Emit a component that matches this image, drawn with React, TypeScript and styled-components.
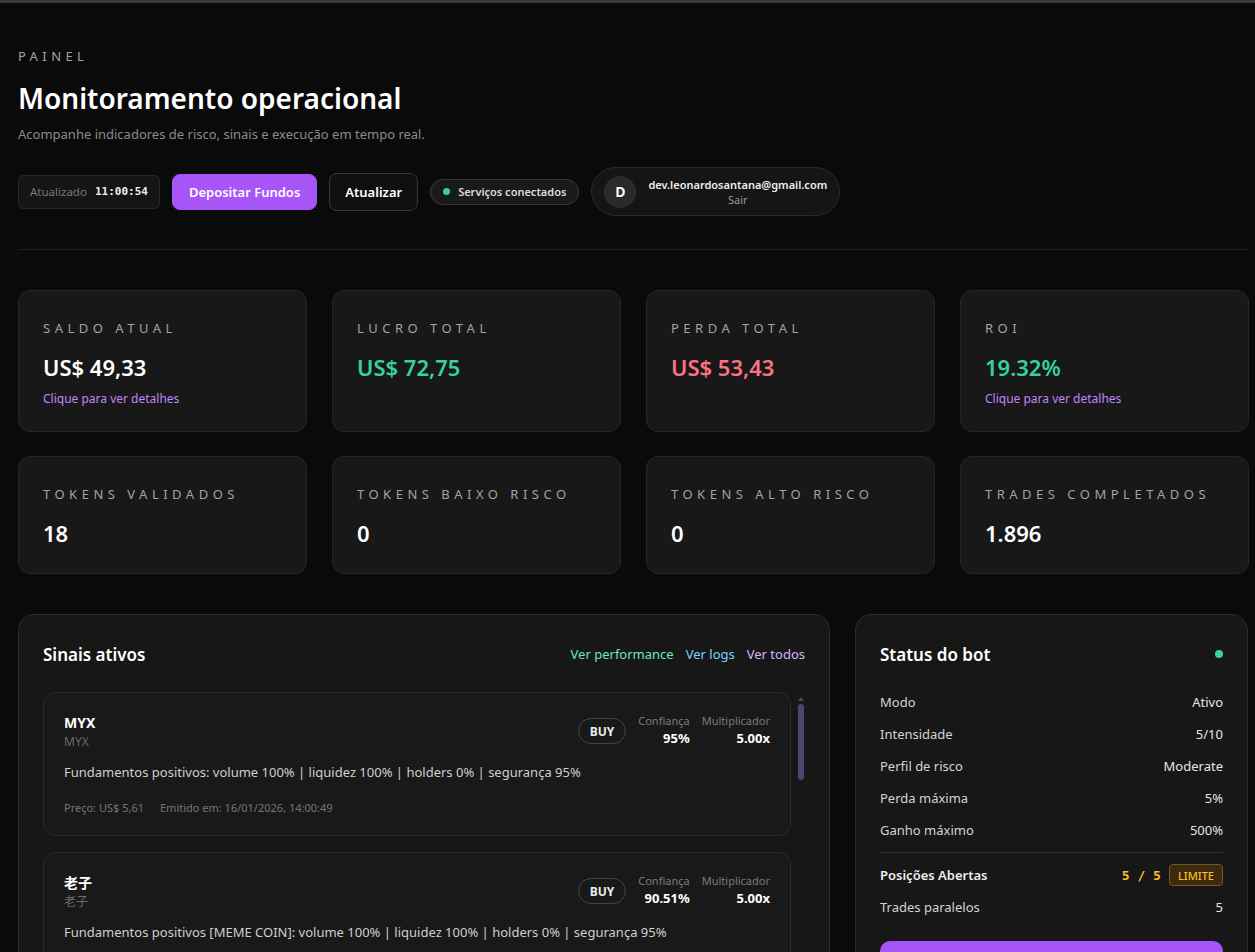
import React from "react";
import styled, { createGlobalStyle } from "styled-components";

const GlobalStyle = createGlobalStyle`
  body {
    margin: 0;
    background: #0a0a0a;
    color: #f5f5f5;
    font-family: "Noto Sans", "Open Sans", "Noto Sans CJK SC", sans-serif;
  }
  * {
    box-sizing: border-box;
  }
`;

const TopStrip = styled.div`
  height: 3px;
  background: #3a3a3a;
`;

const Page = styled.div`
  width: 1231px;
  margin-left: 18px;
  padding-top: 44px;
`;

const Eyebrow = styled.div`
  font-size: 13px;
  line-height: 18px;
  letter-spacing: 4.4px;
  color: #a3a3a3;
  text-transform: uppercase;
`;

const Title = styled.h1`
  margin: 15px 0 0;
  font-size: 28px;
  line-height: 36px;
  font-weight: 600;
  color: #fff;
`;

const Subtitle = styled.p`
  margin: 8px 0 0;
  font-size: 13px;
  line-height: 20px;
  color: #8a8a8a;
`;

const Actions = styled.div`
  display: flex;
  align-items: center;
  gap: 12px;
  margin-top: 23px;
`;

const UpdatedChip = styled.div`
  display: flex;
  align-items: center;
  gap: 8px;
  height: 34px;
  padding: 0 11px;
  border: 1px solid #2a2a2a;
  border-radius: 6px;
  background: #151515;
  font-size: 11.5px;
  color: #777;
`;

const Clock = styled.span`
  font-family: "DejaVu Sans Mono", "Liberation Mono", monospace;
  font-size: 11px;
  font-weight: 600;
  color: #eee;
`;

const Button = styled.button<{ $primary?: boolean }>`
  height: ${(p) => (p.$primary ? "36px" : "38px")};
  padding: 0 ${(p) => (p.$primary ? "16px" : "15px")};
  border-radius: 8px;
  border: 1px solid ${(p) => (p.$primary ? "#a855f7" : "#3a3a3a")};
  background: ${(p) => (p.$primary ? "#a855f7" : "#0f0f0f")};
  color: #fff;
  font-family: inherit;
  font-size: 13px;
  font-weight: 600;
`;

const StatusPill = styled.div`
  display: flex;
  align-items: center;
  gap: 8px;
  height: 26px;
  padding: 0 12px;
  border: 1px solid #3a3a3a;
  border-radius: 999px;
  background: #1a1a1a;
  font-size: 11px;
  font-weight: 600;
  color: #ddd;
`;

const Dot = styled.span<{ $size?: number }>`
  width: ${(p) => p.$size ?? 7}px;
  height: ${(p) => p.$size ?? 7}px;
  border-radius: 50%;
  background: #34d399;
`;

const UserPill = styled.div`
  display: flex;
  align-items: center;
  gap: 12px;
  height: 49px;
  padding: 0 12px;
  border: 1px solid #2a2a2a;
  border-radius: 25px;
  background: #151515;
`;

const Avatar = styled.div`
  width: 32px;
  height: 32px;
  border-radius: 50%;
  background: #2a2a2a;
  display: flex;
  align-items: center;
  justify-content: center;
  font-size: 14px;
  font-weight: 700;
`;

const UserText = styled.div`
  display: flex;
  flex-direction: column;
  align-items: center;
  line-height: 15px;
`;

const Email = styled.span`
  font-size: 11px;
  font-weight: 600;
  color: #eee;
`;

const Logout = styled.span`
  font-size: 11px;
  color: #999;
`;

const Divider = styled.hr`
  margin: 33px 0 0;
  border: 0;
  border-top: 1px solid #1f1f1f;
`;

const StatsGrid = styled.div`
  display: grid;
  grid-template-columns: repeat(4, 1fr);
  column-gap: 25px;
  row-gap: 24px;
  margin-top: 40px;
`;

const StatCard = styled.div`
  padding: 29px 24px 24px;
  border: 1px solid #262626;
  border-radius: 12px;
  background: #181818;
`;

const StatLabel = styled.div`
  font-size: 13px;
  line-height: 16px;
  letter-spacing: 4.5px;
  color: #a3a3a3;
  text-transform: uppercase;
`;

const StatValue = styled.div<{ $tone?: string }>`
  margin-top: 15px;
  font-size: 22px;
  line-height: 32px;
  font-weight: 600;
  color: ${(p) => p.$tone ?? "#fff"};
`;

const DetailLink = styled.div`
  margin-top: 8px;
  font-size: 12px;
  line-height: 16px;
  color: #c084fc;
`;

const Bottom = styled.div`
  display: grid;
  grid-template-columns: 812px 393px;
  gap: 25px;
  margin-top: 40px;
`;

const Panel = styled.section`
  padding: 24px;
  border: 1px solid #2a2a2a;
  border-radius: 16px;
  background: #171717;
  min-height: 400px;
`;

const PanelHeader = styled.div`
  display: flex;
  align-items: center;
  justify-content: space-between;
  height: 30px;
`;

const PanelTitle = styled.h2`
  margin: 0;
  font-size: 17px;
  font-weight: 600;
  color: #fff;
`;

const HeaderLinks = styled.div`
  display: flex;
  gap: 12px;
  font-size: 13px;
`;

const HeaderLink = styled.span<{ $color: string }>`
  color: ${(p) => p.$color};
`;

const ListArea = styled.div`
  display: flex;
  gap: 6px;
  margin-top: 23px;
`;

const SignalList = styled.div`
  flex: 1;
  display: flex;
  flex-direction: column;
  gap: 16px;
`;

const ScrollRail = styled.div`
  width: 8px;
  display: flex;
  flex-direction: column;
  align-items: center;
  padding-top: 5px;
`;

const ScrollArrow = styled.div`
  width: 0;
  height: 0;
  border-left: 3px solid transparent;
  border-right: 3px solid transparent;
  border-bottom: 4px solid #4b4670;
`;

const ScrollThumb = styled.div`
  margin-top: 3px;
  width: 6px;
  height: 76px;
  border-radius: 3px;
  background: #4b4670;
`;

const SignalCard = styled.article`
  padding: 20px 20px 19px;
  border: 1px solid #2a2a2a;
  border-radius: 12px;
  background: #191919;
`;

const SignalTop = styled.div`
  display: flex;
  justify-content: space-between;
  align-items: flex-start;
`;

const TokenName = styled.div`
  font-size: 14px;
  line-height: 20px;
  font-weight: 700;
  color: #fff;
`;

const TokenSymbol = styled.div`
  font-size: 12px;
  line-height: 18px;
  color: #6b6b6b;
`;

const SignalStats = styled.div`
  display: flex;
  align-items: flex-start;
  gap: 12px;
`;

const SideBadge = styled.span`
  margin-top: 5px;
  display: flex;
  align-items: center;
  height: 26px;
  padding: 0 11px;
  border: 1px solid #444;
  border-radius: 999px;
  font-size: 12px;
  font-weight: 700;
  color: #eee;
`;

const Metric = styled.div`
  display: flex;
  flex-direction: column;
  align-items: flex-end;
`;

const MetricLabel = styled.span`
  font-size: 11px;
  line-height: 16px;
  color: #7a7a7a;
`;

const MetricValue = styled.span`
  font-size: 13px;
  line-height: 18px;
  font-weight: 700;
  color: #fff;
`;

const Reason = styled.p`
  margin: 11px 0 0;
  font-size: 13px;
  line-height: 20px;
  color: #cfcfcf;
`;

const Meta = styled.div`
  display: flex;
  gap: 16px;
  margin-top: 18px;
  font-size: 11px;
  line-height: 16px;
  color: #777;
`;

const StatusRows = styled.div`
  display: flex;
  flex-direction: column;
  gap: 12px;
  margin-top: 23px;
`;

const Row = styled.div<{ $strong?: boolean }>`
  display: flex;
  align-items: center;
  justify-content: space-between;
  height: 20px;
  font-size: 13px;
  color: ${(p) => (p.$strong ? "#eee" : "#d4d4d4")};
  font-weight: ${(p) => (p.$strong ? 600 : 400)};
`;

const RowValue = styled.span`
  color: #e5e5e5;
`;

const RowDivider = styled.hr`
  margin: 0;
  border: 0;
  border-top: 1px solid #333;
`;

const Limit = styled.div`
  display: flex;
  align-items: center;
  gap: 8px;
`;

const Count = styled.span`
  font-family: "DejaVu Sans Mono", "Liberation Mono", monospace;
  font-size: 13px;
  font-weight: 700;
  color: #fbbf24;
`;

const LimitBadge = styled.span`
  display: flex;
  align-items: center;
  height: 22px;
  padding: 0 8px;
  border: 1px solid #7a5a1c;
  border-radius: 4px;
  background: #3b2a10;
  color: #fbbf24;
  font-size: 11px;
  font-weight: 500;
`;

const ActionButton = styled.div`
  margin-top: 24px;
  height: 40px;
  border-radius: 10px;
  background: #a855f7;
`;

const stats = [
  { label: "Saldo atual", value: "US$ 49,33", link: true },
  { label: "Lucro total", value: "US$ 72,75", tone: "#34d399" },
  { label: "Perda total", value: "US$ 53,43", tone: "#fb7185" },
  { label: "ROI", value: "19.32%", tone: "#34d399", link: true },
  { label: "Tokens validados", value: "18" },
  { label: "Tokens baixo risco", value: "0" },
  { label: "Tokens alto risco", value: "0" },
  { label: "Trades completados", value: "1.896" },
];

const signals = [
  {
    name: "MYX",
    symbol: "MYX",
    confidence: "95%",
    mult: "5.00x",
    reason: "Fundamentos positivos: volume 100% | liquidez 100% | holders 0% | segurança 95%",
    price: "Preço: US$ 5,61",
    issued: "Emitido em: 16/01/2026, 14:00:49",
  },
  {
    name: "老子",
    symbol: "老子",
    confidence: "90.51%",
    mult: "5.00x",
    reason:
      "Fundamentos positivos [MEME COIN]: volume 100% | liquidez 100% | holders 0% | segurança 95%",
    price: "Preço: US$ 0,01",
    issued: "Emitido em: 16/01/2026, 14:00:49",
  },
];

const botRows = [
  ["Modo", "Ativo"],
  ["Intensidade", "5/10"],
  ["Perfil de risco", "Moderate"],
  ["Perda máxima", "5%"],
  ["Ganho máximo", "500%"],
];

export default function App() {
  return (
    <>
      <GlobalStyle />
      <TopStrip />
      <Page>
        <Eyebrow>Painel</Eyebrow>
        <Title>Monitoramento operacional</Title>
        <Subtitle>Acompanhe indicadores de risco, sinais e execução em tempo real.</Subtitle>

        <Actions>
          <UpdatedChip>
            Atualizado <Clock>11:00:54</Clock>
          </UpdatedChip>
          <Button $primary>Depositar Fundos</Button>
          <Button>Atualizar</Button>
          <StatusPill>
            <Dot />
            Serviços conectados
          </StatusPill>
          <UserPill>
            <Avatar>D</Avatar>
            <UserText>
              <Email>dev.leonardosantana@gmail.com</Email>
              <Logout>Sair</Logout>
            </UserText>
          </UserPill>
        </Actions>

        <Divider />

        <StatsGrid>
          {stats.map((s) => (
            <StatCard key={s.label}>
              <StatLabel>{s.label}</StatLabel>
              <StatValue $tone={s.tone}>{s.value}</StatValue>
              {s.link && <DetailLink>Clique para ver detalhes</DetailLink>}
            </StatCard>
          ))}
        </StatsGrid>

        <Bottom>
          <Panel>
            <PanelHeader>
              <PanelTitle>Sinais ativos</PanelTitle>
              <HeaderLinks>
                <HeaderLink $color="#6ee7b7">Ver performance</HeaderLink>
                <HeaderLink $color="#7dd3fc">Ver logs</HeaderLink>
                <HeaderLink $color="#d8b4fe">Ver todos</HeaderLink>
              </HeaderLinks>
            </PanelHeader>
            <ListArea>
              <SignalList>
                {signals.map((sig) => (
                  <SignalCard key={sig.name}>
                    <SignalTop>
                      <div>
                        <TokenName>{sig.name}</TokenName>
                        <TokenSymbol>{sig.symbol}</TokenSymbol>
                      </div>
                      <SignalStats>
                        <SideBadge>BUY</SideBadge>
                        <Metric>
                          <MetricLabel>Confiança</MetricLabel>
                          <MetricValue>{sig.confidence}</MetricValue>
                        </Metric>
                        <Metric>
                          <MetricLabel>Multiplicador</MetricLabel>
                          <MetricValue>{sig.mult}</MetricValue>
                        </Metric>
                      </SignalStats>
                    </SignalTop>
                    <Reason>{sig.reason}</Reason>
                    <Meta>
                      <span>{sig.price}</span>
                      <span>{sig.issued}</span>
                    </Meta>
                  </SignalCard>
                ))}
              </SignalList>
              <ScrollRail>
                <ScrollArrow />
                <ScrollThumb />
              </ScrollRail>
            </ListArea>
          </Panel>

          <Panel>
            <PanelHeader>
              <PanelTitle>Status do bot</PanelTitle>
              <Dot $size={8} />
            </PanelHeader>
            <StatusRows>
              {botRows.map(([k, v]) => (
                <Row key={k}>
                  <span>{k}</span>
                  <RowValue>{v}</RowValue>
                </Row>
              ))}
              <RowDivider />
              <Row $strong>
                <span>Posições Abertas</span>
                <Limit>
                  <Count>5 / 5</Count>
                  <LimitBadge>LIMITE</LimitBadge>
                </Limit>
              </Row>
              <Row>
                <span>Trades paralelos</span>
                <RowValue>5</RowValue>
              </Row>
            </StatusRows>
            <ActionButton />
          </Panel>
        </Bottom>
      </Page>
    </>
  );
}
